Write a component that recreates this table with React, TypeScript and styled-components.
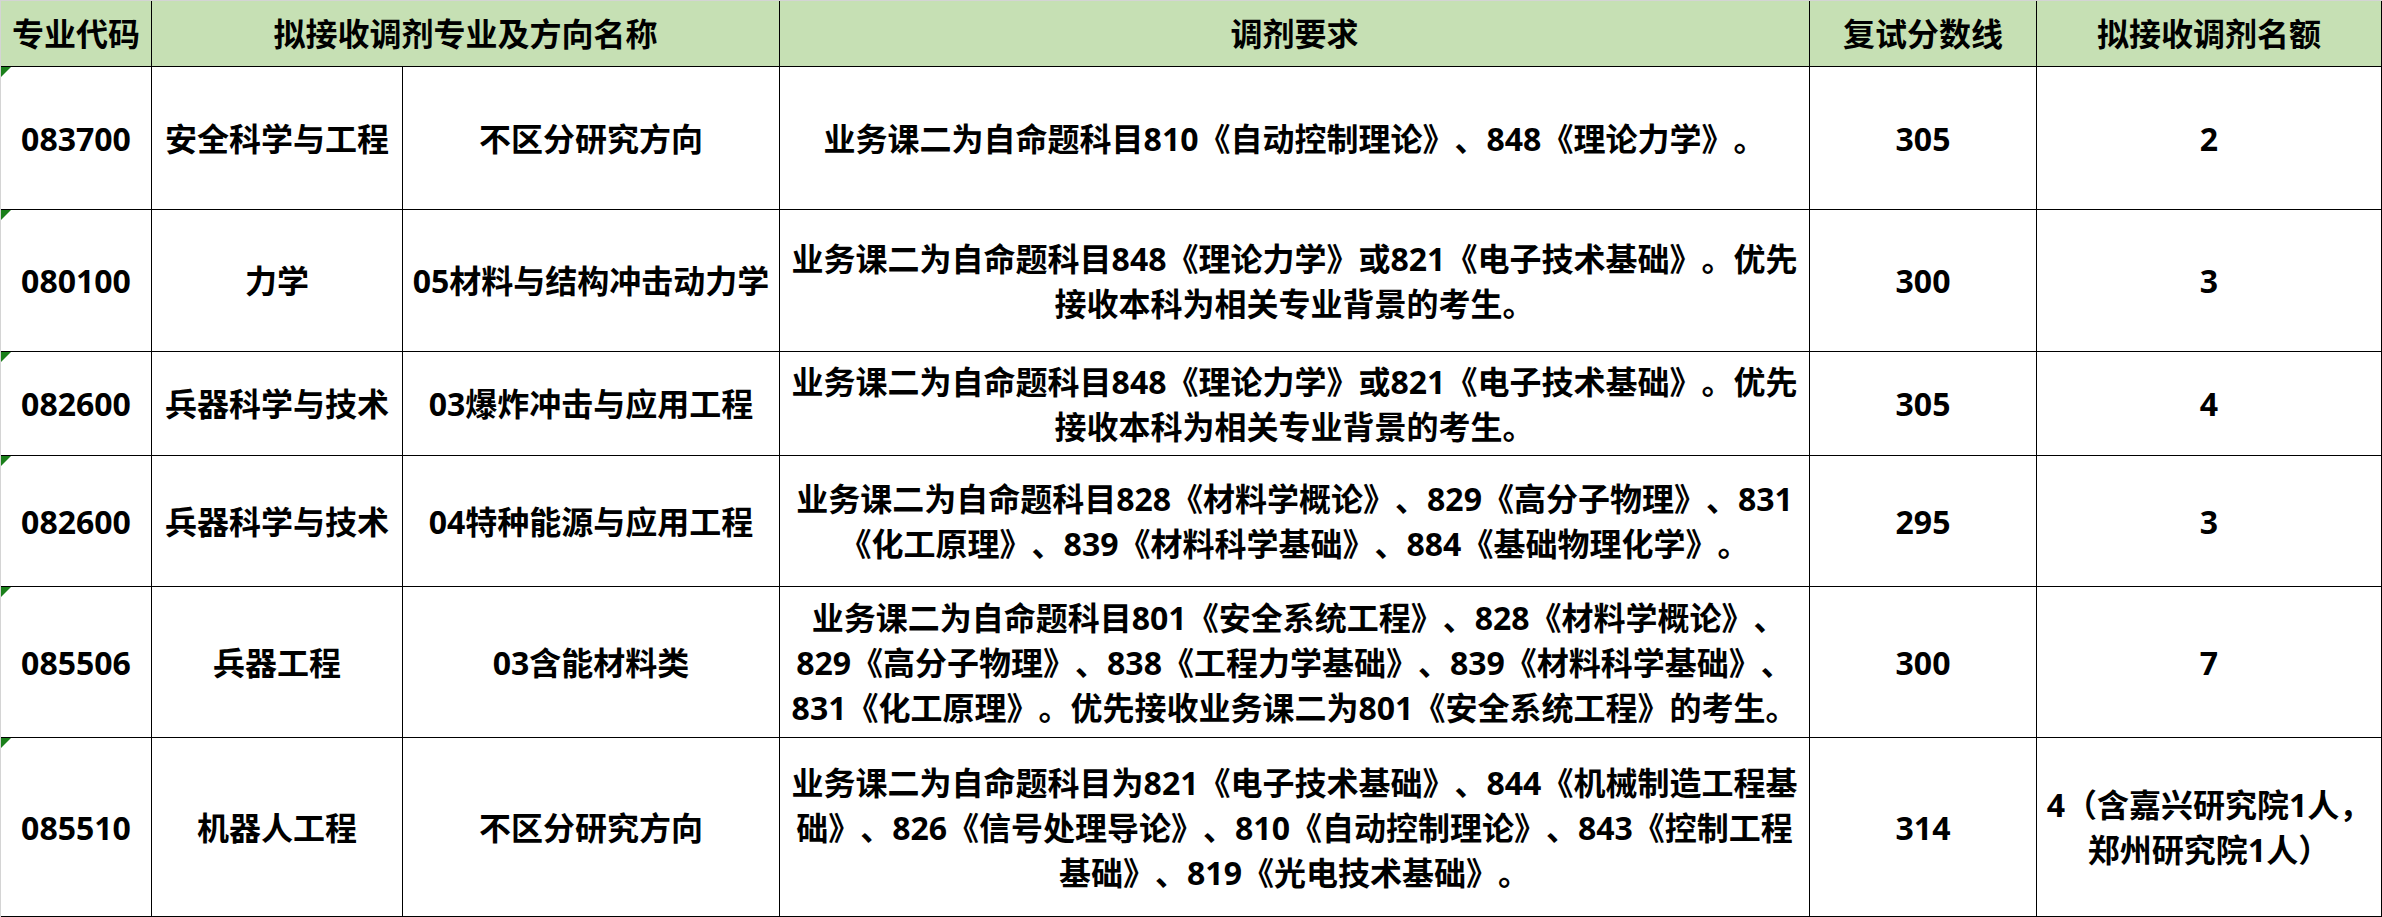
import React from "react";
import styled, { createGlobalStyle } from "styled-components";

const GlobalStyle = createGlobalStyle`
  html, body {
    margin: 0;
    padding: 0;
    background: #ffffff;
  }
  * {
    box-sizing: border-box;
  }
`;

type Row = {
  height: number;
  code: string;
  major: string;
  direction: string;
  req: string[];
  score: string;
  quota: string[];
};

const rows: Row[] = [
  {
    height: 143,
    code: "083700",
    major: "安全科学与工程",
    direction: "不区分研究方向",
    req: ["业务课二为自命题科目810《自动控制理论》、848《理论力学》。"],
    score: "305",
    quota: ["2"],
  },
  {
    height: 142,
    code: "080100",
    major: "力学",
    direction: "05材料与结构冲击动力学",
    req: [
      "业务课二为自命题科目848《理论力学》或821《电子技术基础》。优先",
      "接收本科为相关专业背景的考生。",
    ],
    score: "300",
    quota: ["3"],
  },
  {
    height: 104,
    code: "082600",
    major: "兵器科学与技术",
    direction: "03爆炸冲击与应用工程",
    req: [
      "业务课二为自命题科目848《理论力学》或821《电子技术基础》。优先",
      "接收本科为相关专业背景的考生。",
    ],
    score: "305",
    quota: ["4"],
  },
  {
    height: 131,
    code: "082600",
    major: "兵器科学与技术",
    direction: "04特种能源与应用工程",
    req: [
      "业务课二为自命题科目828《材料学概论》、829《高分子物理》、831",
      "《化工原理》、839《材料科学基础》、884《基础物理化学》。",
    ],
    score: "295",
    quota: ["3"],
  },
  {
    height: 151,
    code: "085506",
    major: "兵器工程",
    direction: "03含能材料类",
    req: [
      " 业务课二为自命题科目801《安全系统工程》、828《材料学概论》、",
      "829《高分子物理》、838《工程力学基础》、839《材料科学基础》、",
      "831《化工原理》。优先接收业务课二为801《安全系统工程》的考生。",
    ],
    score: "300",
    quota: ["7"],
  },
  {
    height: 179,
    code: "085510",
    major: "机器人工程",
    direction: "不区分研究方向",
    req: [
      "业务课二为自命题科目为821《电子技术基础》、844《机械制造工程基",
      "础》、826《信号处理导论》、810《自动控制理论》、843《控制工程",
      "基础》、819《光电技术基础》。",
    ],
    score: "314",
    quota: ["4（含嘉兴研究院1人，", "郑州研究院1人）"],
  },
];

const Sheet = styled.div<{ $rows: string }>`
  display: grid;
  grid-template-columns: 151px 251px 377px 1030px 227px 345px;
  grid-template-rows: ${(p) => p.$rows};
  width: 2382px;
  border-top: 1px solid #d4d4d4;
  border-left: 1px solid #d4d4d4;
  font-family: "Open Sans", "Noto Sans CJK SC", sans-serif;
  font-weight: 700;
  font-size: 32px;
  line-height: 45px;
  color: #000000;
  text-spacing-trim: space-all;
`;

const Cell = styled.div<{ $span?: number; $head?: boolean }>`
  position: relative;
  grid-column: span ${(p) => p.$span ?? 1};
  display: flex;
  flex-direction: column;
  align-items: center;
  justify-content: center;
  text-align: center;
  border-right: 1px solid #000000;
  border-bottom: 1px solid #000000;
  background: ${(p) => (p.$head ? "#c6e0b4" : "#ffffff")};
  overflow: hidden;
`;

const Line = styled.span`
  display: block;
  white-space: pre;
`;

const TextFlag = styled.span`
  position: absolute;
  top: 0;
  left: 0;
  width: 0;
  height: 0;
  border-top: 10px solid #1a7f1a;
  border-right: 10px solid transparent;
`;

const headers: { label: string; span?: number }[] = [
  { label: "专业代码" },
  { label: "拟接收调剂专业及方向名称", span: 2 },
  { label: "调剂要求" },
  { label: "复试分数线" },
  { label: "拟接收调剂名额" },
];

const App: React.FC = () => {
  const template = ["66px", ...rows.map((r) => `${r.height}px`)].join(" ");
  return (
    <>
      <GlobalStyle />
      <Sheet $rows={template}>
        {headers.map((h) => (
          <Cell key={h.label} $head $span={h.span}>
            <Line>{h.label}</Line>
          </Cell>
        ))}
        {rows.map((r, i) => (
          <React.Fragment key={i}>
            <Cell>
              <TextFlag />
              <Line>{r.code}</Line>
            </Cell>
            <Cell>
              <Line>{r.major}</Line>
            </Cell>
            <Cell>
              <Line>{r.direction}</Line>
            </Cell>
            <Cell>
              {r.req.map((l, j) => (
                <Line key={j}>{l}</Line>
              ))}
            </Cell>
            <Cell>
              <Line>{r.score}</Line>
            </Cell>
            <Cell>
              {r.quota.map((l, j) => (
                <Line key={j}>{l}</Line>
              ))}
            </Cell>
          </React.Fragment>
        ))}
      </Sheet>
    </>
  );
};

export default App;
